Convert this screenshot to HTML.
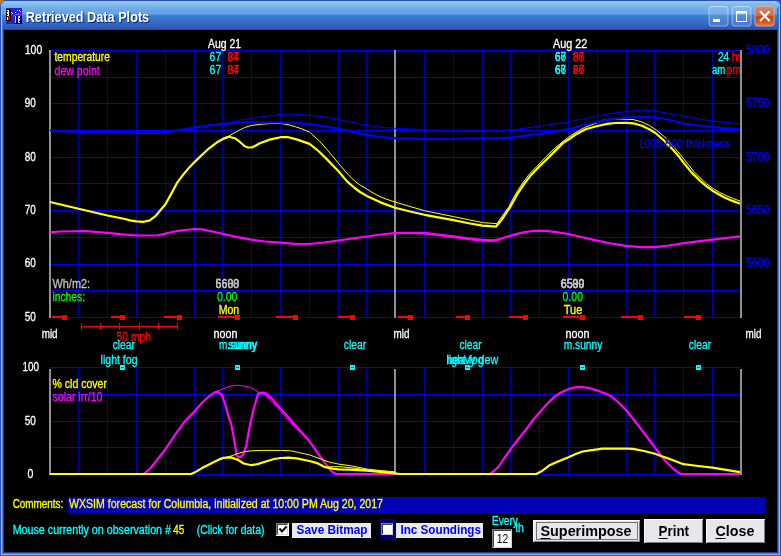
<!DOCTYPE html>
<html><head><meta charset="utf-8"><title>Retrieved Data Plots</title>
<style>html,body{margin:0;padding:0;background:#000;overflow:hidden}svg{display:block;will-change:transform}text{font-family:"Liberation Sans",sans-serif;font-size:12px}.b{font-weight:bold}</style></head><body>
<svg width="781" height="556" viewBox="0 0 781 556">
<defs>
<linearGradient id="tb" x1="0" y1="0" x2="0" y2="30" gradientUnits="userSpaceOnUse"><stop offset="0" stop-color="#2444a8"/><stop offset="0.03" stop-color="#2444a8"/><stop offset="0.045" stop-color="#a0d0f2"/><stop offset="0.1" stop-color="#86c2ee"/><stop offset="0.3" stop-color="#6eaae8"/><stop offset="0.475" stop-color="#62a0e8"/><stop offset="0.5" stop-color="#3a82d2"/><stop offset="0.7" stop-color="#3670c8"/><stop offset="0.9" stop-color="#305cb8"/><stop offset="0.975" stop-color="#2c54b0"/><stop offset="1" stop-color="#1a3070"/></linearGradient>
<linearGradient id="btn" x1="0" y1="0" x2="0" y2="1"><stop offset="0" stop-color="#6f93dd"/><stop offset="0.5" stop-color="#3d6fd0"/><stop offset="1" stop-color="#2f5fc4"/></linearGradient>
<linearGradient id="cls" x1="0" y1="0" x2="0" y2="1"><stop offset="0" stop-color="#d88868"/><stop offset="0.47" stop-color="#cc6a48"/><stop offset="0.5" stop-color="#cc4416"/><stop offset="0.8" stop-color="#d8531e"/><stop offset="1" stop-color="#e47a4c"/></linearGradient>
<clipPath id="cu"><rect x="49" y="40" width="691" height="290"/></clipPath>
</defs>
<rect x="0" y="0" width="781" height="556" fill="#2c4ca8"/>
<rect x="0" y="0" width="8" height="8" fill="#c8781e"/>
<path d="M0 556 V7 Q0 0 7 0 H774 Q781 0 781 7 V556 Z" fill="url(#tb)"/>
<rect x="0" y="30" width="781" height="526" fill="#2e5fc0"/>
<rect x="0" y="30" width="1" height="526" fill="#2e5fc0"/>
<rect x="780" y="30" width="1" height="526" fill="#2e5fc0"/>
<rect x="0" y="555" width="781" height="1" fill="#2e5fc0"/>
<rect x="1" y="30" width="1" height="525" fill="#7faee2"/>
<rect x="779" y="30" width="1" height="525" fill="#7faee2"/>
<rect x="1" y="554" width="779" height="1" fill="#7faee2"/>
<rect x="2" y="30" width="1" height="524" fill="#4a7cd2"/>
<rect x="778" y="30" width="1" height="524" fill="#4a7cd2"/>
<rect x="2" y="553" width="777" height="1" fill="#4a7cd2"/>
<rect x="3" y="30" width="1" height="523" fill="#1e3a98"/>
<rect x="777" y="30" width="1" height="523" fill="#1e3a98"/>
<rect x="3" y="552" width="775" height="1" fill="#1e3a98"/>
<rect x="4" y="30" width="773" height="522" fill="#000"/>
<path d="M0.5 552 V7 Q0.5 0.5 7 0.5 H774 Q780.5 0.5 780.5 7 V552" fill="none" stroke="#2c50b0" stroke-width="1"/>
<path d="M1.5 552 V7 Q1.5 1.5 7 1.5 H774 Q779.5 1.5 779.5 7 V552" fill="none" stroke="#90c0f0" stroke-width="1"/>
<rect x="2" y="6" width="1" height="24" fill="#5a8cdc" fill-opacity="0.6"/><rect x="778" y="6" width="1" height="24" fill="#4a7cd2" fill-opacity="0.8"/>
<rect x="777" y="8" width="1" height="22" fill="#2a4cae" fill-opacity="0.6"/>
<g shape-rendering="crispEdges">
<rect x="6" y="8" width="16" height="16" fill="#2424cc"/>
<rect x="15" y="16" width="7" height="8" fill="#000088"/>
<rect x="6" y="9" width="5" height="12" fill="#000"/>
<rect x="7" y="10" width="3" height="10" fill="#fff"/>
<rect x="9" y="10" width="1" height="8" fill="#000"/>
<rect x="8" y="16" width="2" height="4" fill="#e00000"/>
<rect x="6" y="11" width="2" height="1" fill="#000"/>
<rect x="6" y="14" width="2" height="1" fill="#000"/>
<rect x="6" y="16" width="2" height="1" fill="#000"/>
<rect x="15" y="16" width="1" height="7" fill="#dcdcdc"/><rect x="17" y="16" width="1" height="7" fill="#000"/><rect x="18" y="16" width="2" height="7" fill="#dcdcdc"/><rect x="19" y="18" width="1" height="1" fill="#000"/><rect x="19" y="21" width="1" height="1" fill="#000"/>
<rect x="11" y="12" width="1" height="1" fill="#ff0"/>
<rect x="12" y="13" width="1" height="1" fill="#ff0"/>
<rect x="15" y="12" width="1" height="1" fill="#ff0"/>
<rect x="17" y="10" width="1" height="1" fill="#ff0"/>
<rect x="19" y="10" width="1" height="1" fill="#ff0"/>
<rect x="20" y="11" width="1" height="1" fill="#ff0"/>
<rect x="11" y="14" width="1" height="1" fill="#f0f"/>
<rect x="15" y="14" width="1" height="1" fill="#f0f"/>
<rect x="17" y="14" width="1" height="1" fill="#f0f"/>
<rect x="18" y="14" width="1" height="1" fill="#f0f"/>
<rect x="20" y="14" width="1" height="1" fill="#f0f"/>
<rect x="14" y="15" width="1" height="1" fill="#0af"/>
<rect x="16" y="14" width="1" height="1" fill="#0af"/>
<rect x="18" y="13" width="1" height="1" fill="#0af"/>
</g>
<text class="b" x="26.7" y="22.9" style="font-size:14.4px" fill="#0a246a" textLength="123.5" lengthAdjust="spacingAndGlyphs">Retrieved Data Plots</text>
<text class="b" x="25.7" y="21.9" style="font-size:14.4px" fill="#fff" textLength="123.5" lengthAdjust="spacingAndGlyphs">Retrieved Data Plots</text>
<rect x="709" y="6.5" width="19" height="19.5" rx="2.5" fill="#ffffff" fill-opacity="0.13" stroke="#ffffff" stroke-opacity="0.45" stroke-width="1"/>
<rect x="732" y="6.5" width="19" height="19.5" rx="2.5" fill="#ffffff" fill-opacity="0.13" stroke="#ffffff" stroke-opacity="0.45" stroke-width="1"/>
<rect x="713" y="19" width="7" height="3" fill="#fff"/>
<rect x="736.5" y="12" width="10" height="9.5" fill="none" stroke="#fff" stroke-width="1"/><rect x="736" y="11" width="11" height="2.6" fill="#fff"/>
<rect x="755" y="6.5" width="19" height="19.5" rx="2.5" fill="url(#cls)" stroke="#f0b8a0" stroke-opacity="0.7" stroke-width="1"/>
<path d="M760 11.2 L769.6 21 M769.6 11.2 L760 21" stroke="#fff" stroke-width="2" fill="none"/>
<g shape-rendering="crispEdges">
<rect x="78" y="50" width="1" height="268" fill="#0000a8"/>
<rect x="78" y="367" width="1" height="108" fill="#0000a8"/>
<rect x="107" y="50" width="1" height="268" fill="#0000a8"/>
<rect x="107" y="367" width="1" height="108" fill="#0000a8"/>
<rect x="136" y="50" width="1" height="268" fill="#0000a8"/>
<rect x="136" y="367" width="1" height="108" fill="#0000a8"/>
<rect x="165" y="50" width="1" height="268" fill="#0000a8"/>
<rect x="165" y="367" width="1" height="108" fill="#0000a8"/>
<rect x="194" y="50" width="1" height="268" fill="#0000a8"/>
<rect x="194" y="367" width="1" height="108" fill="#0000a8"/>
<rect x="222" y="50" width="1" height="268" fill="#0000a8"/>
<rect x="222" y="367" width="1" height="108" fill="#0000a8"/>
<rect x="251" y="50" width="1" height="268" fill="#0000a8"/>
<rect x="251" y="367" width="1" height="108" fill="#0000a8"/>
<rect x="280" y="50" width="1" height="268" fill="#0000a8"/>
<rect x="280" y="367" width="1" height="108" fill="#0000a8"/>
<rect x="309" y="50" width="1" height="268" fill="#0000a8"/>
<rect x="309" y="367" width="1" height="108" fill="#0000a8"/>
<rect x="338" y="50" width="1" height="268" fill="#0000a8"/>
<rect x="338" y="367" width="1" height="108" fill="#0000a8"/>
<rect x="366" y="50" width="1" height="268" fill="#0000a8"/>
<rect x="366" y="367" width="1" height="108" fill="#0000a8"/>
<rect x="424" y="50" width="1" height="268" fill="#0000a8"/>
<rect x="424" y="367" width="1" height="108" fill="#0000a8"/>
<rect x="453" y="50" width="1" height="268" fill="#0000a8"/>
<rect x="453" y="367" width="1" height="108" fill="#0000a8"/>
<rect x="482" y="50" width="1" height="268" fill="#0000a8"/>
<rect x="482" y="367" width="1" height="108" fill="#0000a8"/>
<rect x="510" y="50" width="1" height="268" fill="#0000a8"/>
<rect x="510" y="367" width="1" height="108" fill="#0000a8"/>
<rect x="539" y="50" width="1" height="268" fill="#0000a8"/>
<rect x="539" y="367" width="1" height="108" fill="#0000a8"/>
<rect x="568" y="50" width="1" height="268" fill="#0000a8"/>
<rect x="568" y="367" width="1" height="108" fill="#0000a8"/>
<rect x="597" y="50" width="1" height="268" fill="#0000a8"/>
<rect x="597" y="367" width="1" height="108" fill="#0000a8"/>
<rect x="626" y="50" width="1" height="268" fill="#0000a8"/>
<rect x="626" y="367" width="1" height="108" fill="#0000a8"/>
<rect x="654" y="50" width="1" height="268" fill="#0000a8"/>
<rect x="654" y="367" width="1" height="108" fill="#0000a8"/>
<rect x="683" y="50" width="1" height="268" fill="#0000a8"/>
<rect x="683" y="367" width="1" height="108" fill="#0000a8"/>
<rect x="712" y="50" width="1" height="268" fill="#0000a8"/>
<rect x="712" y="367" width="1" height="108" fill="#0000a8"/>
<rect x="50" y="50" width="691" height="1" fill="#0000f0"/>
<rect x="50" y="77" width="691" height="1" fill="#0000f0"/>
<rect x="50" y="103" width="691" height="1" fill="#0000f0"/>
<rect x="50" y="130" width="691" height="1" fill="#0000f0"/>
<rect x="50" y="157" width="691" height="1" fill="#0000f0"/>
<rect x="50" y="183" width="691" height="1" fill="#0000f0"/>
<rect x="50" y="210" width="691" height="1" fill="#0000f0"/>
<rect x="50" y="237" width="691" height="1" fill="#0000f0"/>
<rect x="50" y="264" width="691" height="1" fill="#0000f0"/>
<rect x="50" y="290" width="691" height="1" fill="#0000f0"/>
<rect x="50" y="317" width="691" height="1" fill="#0000f0"/>
<rect x="50" y="367" width="691" height="1" fill="#0000f0"/>
<rect x="50" y="394" width="691" height="1" fill="#0000f0"/>
<rect x="50" y="421" width="691" height="1" fill="#0000f0"/>
<rect x="50" y="447" width="691" height="1" fill="#0000f0"/>
<rect x="50" y="474" width="691" height="1" fill="#0000f0"/>
<rect x="49" y="50" width="2" height="268" fill="#909090"/>
<rect x="49" y="369" width="2" height="106" fill="#909090"/>
<rect x="394" y="50" width="2" height="268" fill="#909090"/>
<rect x="394" y="369" width="2" height="106" fill="#909090"/>
<rect x="740" y="50" width="2" height="268" fill="#909090"/>
<rect x="740" y="369" width="2" height="106" fill="#909090"/>
</g>
<polyline points="222.0,138.5 228.9,136.0 236.8,131.5 244.7,127.5 251.5,125.4 261.7,124.2 270.0,123.6 280.5,123.4 288.0,124.6 295.4,126.7 302.0,129.0 309.6,132.1 319.0,140.6 327.0,149.5 338.5,163.3 346.8,173.2 354.7,181.1 360.0,185.0 366.8,189.0 374.0,193.5 381.0,197.2 388.0,199.7 395.0,202.0 410.0,206.5 424.5,210.7 453.4,216.6 470.0,220.0 482.5,222.6 497.0,223.7 503.0,215.0 508.9,206.8 515.0,195.0 521.8,184.1 529.0,174.5 537.0,166.2 545.6,157.1 555.0,148.0 565.0,139.8 568.6,137.1 575.8,132.3 584.5,127.5 597.4,122.6 603.5,120.2 609.3,119.5 620.2,119.2 633.0,119.5 642.0,122.0 649.6,125.6 657.3,130.7 665.6,137.8 673.0,146.0 680.7,155.0 687.0,163.0 693.7,171.3 700.0,177.8 706.6,183.8 713.0,188.5 719.6,192.4 726.0,195.5 732.5,198.3 740.0,201.0" fill="none" stroke="#ffff00" stroke-width="1" stroke-linejoin="round" />
<polyline points="222.0,124.0 227.0,123.3 236.0,121.2 240.0,119.8 251.5,118.4 265.0,116.3 280.5,114.5 289.4,114.1 297.0,114.3 309.6,115.3 324.0,117.0 338.5,119.4 352.0,122.2 360.0,123.8 366.8,124.9 380.0,127.3 395.0,128.3 415.0,129.2 430.0,130.0 453.0,131.0 470.0,131.3 482.6,131.4 497.0,130.8 510.4,130.1 524.0,128.3 539.5,126.2 554.0,124.0 568.6,122.0 580.0,119.5 597.5,116.0 611.0,113.5 626.6,111.5 639.4,110.0 654.8,110.9 669.0,113.5 684.2,116.2 698.0,118.8 712.5,121.0 726.0,122.5 740.0,123.8" fill="none" stroke="#0000ff" stroke-width="1" stroke-linejoin="round" />
<polyline points="50.0,130.5 58.0,131.2 70.0,131.5 80.0,132.0 107.0,132.2 120.0,132.5 136.0,132.9 157.7,132.9 165.0,132.2 171.5,131.5 180.0,130.0 194.5,127.5 210.0,125.4 222.5,123.8 236.0,122.8 251.5,122.4 280.5,122.4 297.3,123.2 309.6,124.2 324.0,126.3 338.5,128.7 352.0,131.8 360.0,133.7 366.8,134.8 380.0,137.0 395.0,138.1 410.0,138.5 424.0,138.8 453.0,138.8 470.0,138.5 482.0,138.4 500.0,138.2 510.4,137.7 524.0,135.8 539.5,133.8 554.0,131.7 568.6,129.2 579.2,126.2 597.5,121.8 611.2,119.2 626.6,117.6 636.8,116.9 654.8,117.3 665.6,119.0 683.5,123.3 698.0,125.5 712.5,127.0 726.0,128.4 740.0,129.6" fill="none" stroke="#0000ff" stroke-width="2.2" stroke-linejoin="round" />
<polyline points="410.0,233.5 424.5,233.9 438.0,235.6 453.4,237.6 468.0,239.6 482.6,241.2 493.4,241.6 500.0,240.0" fill="none" stroke="#ff00ff" stroke-width="1" stroke-linejoin="round" />
<polyline points="50.0,232.3 60.0,231.5 86.0,231.0 95.0,231.8 107.5,232.8 120.0,234.2 136.6,235.5 157.5,235.5 165.5,233.6 172.0,232.0 180.0,230.7 194.4,229.0 202.0,229.3 210.0,231.0 222.4,233.8 236.0,236.8 251.3,239.7 265.0,241.5 280.4,242.7 295.0,243.8 309.3,244.0 324.0,242.5 338.5,240.5 352.0,238.5 366.8,236.5 381.0,234.5 395.0,233.2 410.0,232.8 424.5,232.9 438.0,234.5 453.4,236.4 468.0,238.4 482.6,239.9 493.4,240.4 500.0,239.0 510.9,235.6 518.0,233.6 525.0,232.2 533.0,231.0 540.0,230.7 548.0,231.2 556.0,232.2 568.4,234.0 580.0,236.8 597.2,240.6 611.0,243.5 626.1,245.8 641.0,247.2 655.0,247.2 669.0,245.5 684.2,243.1 698.0,241.3 712.5,239.6 726.0,238.0 740.0,236.4" fill="none" stroke="#ff00ff" stroke-width="2.2" stroke-linejoin="round" />
<polyline points="50.0,202.0 78.6,208.8 107.5,215.5 125.0,219.0 130.0,220.4 136.5,221.4 143.8,221.8 149.8,220.4 155.7,215.9 160.6,210.0 165.6,204.0 171.5,193.2 177.4,182.3 183.4,174.4 189.3,167.4 194.5,162.1 201.2,155.6 209.1,148.3 217.0,142.3 222.5,139.2 228.9,136.8 234.8,138.2 239.7,141.7 244.7,146.3 247.5,147.3 251.5,147.5 255.0,146.0 259.8,143.2 269.7,139.6 280.5,137.2 287.5,137.0 297.3,139.6 309.6,143.9 319.0,151.5 327.0,159.4 338.5,171.2 346.8,181.1 354.7,188.0 360.0,192.0 366.8,195.9 381.0,202.6 395.0,207.8 410.0,211.5 424.5,214.8 453.4,220.2 470.0,223.5 482.5,225.6 495.9,226.7 502.4,218.7 510.4,206.8 517.5,193.8 524.0,184.1 531.6,174.4 539.5,166.2 547.8,158.2 556.4,149.6 562.9,143.1 568.6,139.5 576.6,133.9 585.6,129.2 597.5,126.0 607.4,123.9 615.0,123.0 626.6,122.8 633.0,123.3 642.0,125.8 649.6,129.5 654.8,132.5 663.4,140.0 672.0,148.6 678.6,156.2 683.5,162.6 691.5,172.4 700.2,181.0 706.6,186.4 712.5,190.7 723.9,197.2 732.5,200.9 740.0,203.7" fill="none" stroke="#ffff00" stroke-width="2.2" stroke-linejoin="round" />
<polyline points="213.0,392.8 215.6,391.5 222.8,388.9 230.0,386.3 237.1,385.2 244.0,386.0 251.5,387.7 258.0,392.0 262.0,393.5 266.0,396.0 272.0,401.5 280.6,411.5 292.0,424.0 300.0,432.5" fill="none" stroke="#ff00ff" stroke-width="1" stroke-linejoin="round" />
<polyline points="50.0,474.0 143.5,474.0 149.8,469.0 157.0,460.0 165.4,449.2 175.0,434.9 184.0,422.3 194.4,411.5 202.0,402.8 209.1,396.2 215.4,391.8 218.5,392.3 221.8,394.8 225.6,405.5 228.9,418.0 231.0,423.0 234.0,438.5 236.7,455.0 238.2,457.6 241.0,456.5 243.7,453.9 246.4,444.7 250.5,422.0 254.5,405.7 258.2,393.4 262.0,392.7 265.8,393.4 272.0,398.6 280.6,408.8 292.5,422.1 309.5,441.3 321.1,457.8 331.4,471.3 335.9,474.0 395.0,474.0 489.9,474.0 494.0,471.0 498.3,467.0 504.0,458.5 511.0,448.7 518.0,439.5 526.5,429.0 533.0,420.0 539.8,412.1 547.0,404.0 554.6,396.6 561.0,392.5 568.5,389.0 575.0,387.3 581.0,386.8 589.0,388.0 597.5,390.4 604.0,393.0 610.7,396.0 618.0,402.0 626.2,410.1 632.0,417.5 638.9,426.2 647.0,437.0 654.9,447.3 661.0,455.5 667.0,462.8 673.0,468.5 678.3,472.7 681.0,474.0 740.0,474.0" fill="none" stroke="#ff00ff" stroke-width="2.2" stroke-linejoin="round" />
<polyline points="225.0,457.5 231.0,456.0 237.0,453.9 243.7,451.8 251.5,450.8 261.7,450.4 280.6,450.4 290.4,450.8 298.6,452.5 309.5,454.9 319.0,458.4 329.3,462.1 338.6,464.1 350.0,465.6 366.8,469.0 380.0,470.5 395.0,471.8" fill="none" stroke="#ffff00" stroke-width="1" stroke-linejoin="round" />
<polyline points="325.0,467.0 338.6,466.6 350.0,467.6 366.8,469.8 395.0,472.6" fill="none" stroke="#ffff00" stroke-width="1" stroke-linejoin="round" />
<polyline points="50.0,474.0 191.2,474.0 194.4,472.6 202.0,468.1 211.0,463.6 220.0,459.1 223.5,457.9 231.0,457.4 238.2,460.0 243.7,463.5 251.5,465.2 257.6,464.1 265.8,461.5 274.0,459.0 280.6,458.0 288.4,457.6 296.6,458.4 309.5,461.0 317.0,463.1 325.2,467.2 333.4,468.9 338.6,469.3 350.0,469.6 366.8,470.7 380.0,472.0 395.0,473.4 400.0,474.0 536.3,474.0 542.0,471.0 549.0,465.6 558.0,461.5 568.5,457.2 575.0,454.3 582.5,451.5 590.0,450.3 597.5,449.3 602.0,448.7 626.2,448.7 633.0,448.9 644.0,451.0 654.9,453.8 661.0,456.0 667.0,458.0 675.0,461.0 683.4,464.2 698.0,466.0 712.4,467.6 726.0,469.8 740.0,472.1" fill="none" stroke="#ffff00" stroke-width="2.2" stroke-linejoin="round" />
<g shape-rendering="crispEdges">
<rect x="62" y="315" width="5" height="5" fill="#ff0000"/>
<rect x="52" y="316" width="10" height="2" fill="#ff0000"/>
<rect x="120" y="315" width="5" height="5" fill="#ff0000"/>
<rect x="111" y="316" width="9" height="2" fill="#ff0000"/>
<rect x="177" y="315" width="5" height="5" fill="#ff0000"/>
<rect x="164" y="316" width="13" height="2" fill="#ff0000"/>
<rect x="235" y="315" width="5" height="5" fill="#ff0000"/>
<rect x="218" y="316" width="17" height="2" fill="#ff0000"/>
<rect x="293" y="315" width="5" height="5" fill="#ff0000"/>
<rect x="276" y="316" width="17" height="2" fill="#ff0000"/>
<rect x="350" y="315" width="5" height="5" fill="#ff0000"/>
<rect x="338" y="316" width="12" height="2" fill="#ff0000"/>
<rect x="408" y="315" width="5" height="5" fill="#ff0000"/>
<rect x="398" y="316" width="10" height="2" fill="#ff0000"/>
<rect x="465" y="315" width="5" height="5" fill="#ff0000"/>
<rect x="456" y="316" width="9" height="2" fill="#ff0000"/>
<rect x="523" y="315" width="5" height="5" fill="#ff0000"/>
<rect x="509" y="316" width="14" height="2" fill="#ff0000"/>
<rect x="580" y="315" width="5" height="5" fill="#ff0000"/>
<rect x="563" y="316" width="17" height="2" fill="#ff0000"/>
<rect x="638" y="315" width="5" height="5" fill="#ff0000"/>
<rect x="621" y="316" width="17" height="2" fill="#ff0000"/>
<rect x="696" y="315" width="5" height="5" fill="#ff0000"/>
<rect x="684" y="316" width="12" height="2" fill="#ff0000"/>
<rect x="81" y="326" width="97" height="1" fill="#ff0000"/>
<rect x="81" y="323" width="1" height="7" fill="#ff0000"/>
<rect x="100" y="323" width="1" height="7" fill="#ff0000"/>
<rect x="119" y="323" width="1" height="7" fill="#ff0000"/>
<rect x="139" y="323" width="1" height="7" fill="#ff0000"/>
<rect x="158" y="323" width="1" height="7" fill="#ff0000"/>
<rect x="177" y="323" width="1" height="7" fill="#ff0000"/>
<rect x="120" y="365" width="5" height="5" fill="#00ffff"/>
<rect x="121" y="367" width="3" height="1" fill="#0040ff"/>
<rect x="235" y="365" width="5" height="5" fill="#00ffff"/>
<rect x="236" y="367" width="3" height="1" fill="#0040ff"/>
<rect x="350" y="365" width="5" height="5" fill="#00ffff"/>
<rect x="351" y="367" width="3" height="1" fill="#0040ff"/>
<rect x="465" y="365" width="5" height="5" fill="#00ffff"/>
<rect x="466" y="367" width="3" height="1" fill="#0040ff"/>
<rect x="580" y="365" width="5" height="5" fill="#00ffff"/>
<rect x="581" y="367" width="3" height="1" fill="#0040ff"/>
<rect x="696" y="365" width="5" height="5" fill="#00ffff"/>
<rect x="697" y="367" width="3" height="1" fill="#0040ff"/>
</g>
<text x="24.8" y="53.7" fill="#ffffff" stroke="#ffffff" stroke-width="0.3" textLength="17.4" lengthAdjust="spacingAndGlyphs">100</text>
<text x="24.8" y="107.1" fill="#ffffff" stroke="#ffffff" stroke-width="0.3" textLength="11.1" lengthAdjust="spacingAndGlyphs">90</text>
<text x="24.8" y="160.5" fill="#ffffff" stroke="#ffffff" stroke-width="0.3" textLength="11.1" lengthAdjust="spacingAndGlyphs">80</text>
<text x="24.8" y="213.9" fill="#ffffff" stroke="#ffffff" stroke-width="0.3" textLength="11.1" lengthAdjust="spacingAndGlyphs">70</text>
<text x="24.8" y="267.3" fill="#ffffff" stroke="#ffffff" stroke-width="0.3" textLength="11.1" lengthAdjust="spacingAndGlyphs">60</text>
<text x="24.8" y="320.7" fill="#ffffff" stroke="#ffffff" stroke-width="0.3" textLength="11.1" lengthAdjust="spacingAndGlyphs">50</text>
<text x="746.0" y="53.7" fill="#0000ff" stroke="#0000ff" stroke-width="0.3" textLength="23.3" lengthAdjust="spacingAndGlyphs">5800</text>
<text x="746.0" y="107.1" fill="#0000ff" stroke="#0000ff" stroke-width="0.3" textLength="23.3" lengthAdjust="spacingAndGlyphs">5750</text>
<text x="746.0" y="160.5" fill="#0000ff" stroke="#0000ff" stroke-width="0.3" textLength="23.3" lengthAdjust="spacingAndGlyphs">5700</text>
<text x="746.0" y="213.9" fill="#0000ff" stroke="#0000ff" stroke-width="0.3" textLength="23.3" lengthAdjust="spacingAndGlyphs">5650</text>
<text x="746.0" y="267.3" fill="#0000ff" stroke="#0000ff" stroke-width="0.3" textLength="23.3" lengthAdjust="spacingAndGlyphs">5600</text>
<text x="208.1" y="47.7" fill="#ffffff" stroke="#ffffff" stroke-width="0.3" textLength="33.0" lengthAdjust="spacingAndGlyphs">Aug 21</text>
<text x="553.0" y="47.7" fill="#ffffff" stroke="#ffffff" stroke-width="0.3" textLength="34.3" lengthAdjust="spacingAndGlyphs">Aug 22</text>
<text x="209.6" y="60.7" fill="#00ffff" stroke="#00ffff" stroke-width="0.3" textLength="11.6" lengthAdjust="spacingAndGlyphs">67</text>
<text x="227.6" y="60.7" fill="#ff0000" stroke="#ff0000" stroke-width="0.3" textLength="11.5" lengthAdjust="spacingAndGlyphs">84</text>
<text x="227.6" y="60.7" fill="#ff0000" stroke="#ff0000" stroke-width="0.3" textLength="11.5" lengthAdjust="spacingAndGlyphs">87</text>
<text x="554.9" y="60.7" fill="#00ffff" stroke="#00ffff" stroke-width="0.3" textLength="11.1" lengthAdjust="spacingAndGlyphs">66</text>
<text x="554.9" y="60.7" fill="#00ffff" stroke="#00ffff" stroke-width="0.3" textLength="11.1" lengthAdjust="spacingAndGlyphs">67</text>
<text x="572.7" y="60.7" fill="#ff0000" stroke="#ff0000" stroke-width="0.3" textLength="11.8" lengthAdjust="spacingAndGlyphs">86</text>
<text x="572.7" y="60.7" fill="#ff0000" stroke="#ff0000" stroke-width="0.3" textLength="11.8" lengthAdjust="spacingAndGlyphs">87</text>
<text x="209.6" y="73.5" fill="#00ffff" stroke="#00ffff" stroke-width="0.3" textLength="11.6" lengthAdjust="spacingAndGlyphs">67</text>
<text x="227.6" y="73.5" fill="#ff0000" stroke="#ff0000" stroke-width="0.3" textLength="11.5" lengthAdjust="spacingAndGlyphs">84</text>
<text x="227.6" y="73.5" fill="#ff0000" stroke="#ff0000" stroke-width="0.3" textLength="11.5" lengthAdjust="spacingAndGlyphs">87</text>
<text x="554.9" y="73.5" fill="#00ffff" stroke="#00ffff" stroke-width="0.3" textLength="11.1" lengthAdjust="spacingAndGlyphs">66</text>
<text x="554.9" y="73.5" fill="#00ffff" stroke="#00ffff" stroke-width="0.3" textLength="11.1" lengthAdjust="spacingAndGlyphs">67</text>
<text x="572.7" y="73.5" fill="#ff0000" stroke="#ff0000" stroke-width="0.3" textLength="11.8" lengthAdjust="spacingAndGlyphs">86</text>
<text x="572.7" y="73.5" fill="#ff0000" stroke="#ff0000" stroke-width="0.3" textLength="11.8" lengthAdjust="spacingAndGlyphs">87</text>
<text x="717.9" y="60.8" fill="#00ffff" stroke="#00ffff" stroke-width="0.3" textLength="11.3" lengthAdjust="spacingAndGlyphs">24</text>
<text x="731.7" y="60.8" fill="#ff0000" stroke="#ff0000" stroke-width="0.3" textLength="9.5" lengthAdjust="spacingAndGlyphs" clip-path="url(#cu)">hr</text>
<text x="712.0" y="73.7" fill="#00ffff" stroke="#00ffff" stroke-width="0.3" textLength="13.3" lengthAdjust="spacingAndGlyphs">am</text>
<text x="726.8" y="73.7" fill="#ff0000" stroke="#ff0000" stroke-width="0.3" textLength="14.2" lengthAdjust="spacingAndGlyphs" clip-path="url(#cu)">pm</text>
<text x="54.5" y="61.2" fill="#ffff00" stroke="#ffff00" stroke-width="0.3" textLength="55.5" lengthAdjust="spacingAndGlyphs">temperature</text>
<text x="54.5" y="74.5" fill="#ff00ff" stroke="#ff00ff" stroke-width="0.3" textLength="45.3" lengthAdjust="spacingAndGlyphs">dew point</text>
<text x="638.3" y="148.0" fill="#0000ff" stroke="#0000ff" stroke-width="0.3" textLength="91.7" lengthAdjust="spacingAndGlyphs">1000-500 thickness</text>
<text x="52.5" y="287.7" fill="#c0c0c0" stroke="#c0c0c0" stroke-width="0.3" textLength="37.6" lengthAdjust="spacingAndGlyphs">Wh/m2:</text>
<text x="52.5" y="301.0" fill="#00ff00" stroke="#00ff00" stroke-width="0.3" textLength="32.5" lengthAdjust="spacingAndGlyphs">inches:</text>
<text x="215.6" y="287.9" fill="#c0c0c0" stroke="#c0c0c0" stroke-width="0.3" textLength="23.6" lengthAdjust="spacingAndGlyphs">6688</text>
<text x="215.6" y="287.9" fill="#c0c0c0" stroke="#c0c0c0" stroke-width="0.3" textLength="23.6" lengthAdjust="spacingAndGlyphs">5600</text>
<text x="216.9" y="301.0" fill="#00ff00" stroke="#00ff00" stroke-width="0.3" textLength="20.5" lengthAdjust="spacingAndGlyphs">0.00</text>
<text x="218.7" y="313.8" fill="#ffff00" stroke="#ffff00" stroke-width="0.3" textLength="20.5" lengthAdjust="spacingAndGlyphs">Mon</text>
<text x="560.8" y="287.9" fill="#c0c0c0" stroke="#c0c0c0" stroke-width="0.3" textLength="23.5" lengthAdjust="spacingAndGlyphs">6590</text>
<text x="560.8" y="287.9" fill="#c0c0c0" stroke="#c0c0c0" stroke-width="0.3" textLength="23.5" lengthAdjust="spacingAndGlyphs">6500</text>
<text x="560.8" y="287.9" fill="#c0c0c0" stroke="#c0c0c0" stroke-width="0.3" textLength="23.5" lengthAdjust="spacingAndGlyphs">6539</text>
<text x="562.6" y="301.0" fill="#00ff00" stroke="#00ff00" stroke-width="0.3" textLength="20.4" lengthAdjust="spacingAndGlyphs">0.00</text>
<text x="563.8" y="313.8" fill="#ffff00" stroke="#ffff00" stroke-width="0.3" textLength="18.5" lengthAdjust="spacingAndGlyphs">Tue</text>
<text x="116.5" y="341.2" fill="#ff0000" stroke="#ff0000" stroke-width="0.3" textLength="34.5" lengthAdjust="spacingAndGlyphs">50 mph</text>
<text x="41.7" y="338.2" fill="#ffffff" stroke="#ffffff" stroke-width="0.3" textLength="15.9" lengthAdjust="spacingAndGlyphs">mid</text>
<text x="393.6" y="338.2" fill="#ffffff" stroke="#ffffff" stroke-width="0.3" textLength="15.9" lengthAdjust="spacingAndGlyphs">mid</text>
<text x="745.6" y="338.2" fill="#ffffff" stroke="#ffffff" stroke-width="0.3" textLength="15.9" lengthAdjust="spacingAndGlyphs">mid</text>
<text x="213.6" y="338.2" fill="#ffffff" stroke="#ffffff" stroke-width="0.3" textLength="23.8" lengthAdjust="spacingAndGlyphs">noon</text>
<text x="565.6" y="338.2" fill="#ffffff" stroke="#ffffff" stroke-width="0.3" textLength="23.8" lengthAdjust="spacingAndGlyphs">noon</text>
<text x="112.7" y="348.8" fill="#00ffff" stroke="#00ffff" stroke-width="0.3" textLength="22.3" lengthAdjust="spacingAndGlyphs">clear</text>
<text x="343.8" y="348.8" fill="#00ffff" stroke="#00ffff" stroke-width="0.3" textLength="22.3" lengthAdjust="spacingAndGlyphs">clear</text>
<text x="459.4" y="348.8" fill="#00ffff" stroke="#00ffff" stroke-width="0.3" textLength="22.3" lengthAdjust="spacingAndGlyphs">clear</text>
<text x="688.8" y="348.8" fill="#00ffff" stroke="#00ffff" stroke-width="0.3" textLength="22.3" lengthAdjust="spacingAndGlyphs">clear</text>
<text x="219.0" y="348.8" fill="#00ffff" stroke="#00ffff" stroke-width="0.3" textLength="38.2" lengthAdjust="spacingAndGlyphs">m.sunny</text>
<text x="228.0" y="348.8" fill="#00ffff" stroke="#00ffff" stroke-width="0.3" textLength="29.0" lengthAdjust="spacingAndGlyphs">sunny</text>
<text x="563.8" y="348.8" fill="#00ffff" stroke="#00ffff" stroke-width="0.3" textLength="38.5" lengthAdjust="spacingAndGlyphs">m.sunny</text>
<text x="100.6" y="363.7" fill="#00ffff" stroke="#00ffff" stroke-width="0.3" textLength="36.9" lengthAdjust="spacingAndGlyphs">light fog</text>
<text x="446.6" y="363.7" fill="#00ffff" stroke="#00ffff" stroke-width="0.3" textLength="36.9" lengthAdjust="spacingAndGlyphs">light fog</text>
<text x="446.6" y="363.7" fill="#00ffff" stroke="#00ffff" stroke-width="0.3" textLength="51.7" lengthAdjust="spacingAndGlyphs">heavy dew</text>
<text x="22.5" y="371.3" fill="#ffffff" stroke="#ffffff" stroke-width="0.3" textLength="16.5" lengthAdjust="spacingAndGlyphs">100</text>
<text x="24.8" y="425.0" fill="#ffffff" stroke="#ffffff" stroke-width="0.3" textLength="11.1" lengthAdjust="spacingAndGlyphs">50</text>
<text x="27.4" y="478.4" fill="#ffffff" stroke="#ffffff" stroke-width="0.3" textLength="5.9" lengthAdjust="spacingAndGlyphs">0</text>
<text x="52.5" y="387.8" fill="#ffff00" stroke="#ffff00" stroke-width="0.3" textLength="54.5" lengthAdjust="spacingAndGlyphs">% cld cover</text>
<text x="52.5" y="400.6" fill="#ff00ff" stroke="#ff00ff" stroke-width="0.3" textLength="49.9" lengthAdjust="spacingAndGlyphs">solar irr/10</text>
<rect x="68" y="497" width="697" height="16" fill="#0000b4" shape-rendering="crispEdges"/>
<text x="12.7" y="507.6" fill="#ffff00" stroke="#ffff00" stroke-width="0.3" textLength="50.6" lengthAdjust="spacingAndGlyphs">Comments:</text>
<text x="69.0" y="507.6" fill="#ffff00" stroke="#ffff00" stroke-width="0.3" textLength="314.0" lengthAdjust="spacingAndGlyphs">WXSIM forecast for Columbia, initialized at 10:00 PM Aug 20, 2017</text>
<text x="12.7" y="534.3" fill="#00ffff" stroke="#00ffff" stroke-width="0.3" textLength="158.3" lengthAdjust="spacingAndGlyphs">Mouse currently on observation #</text>
<text x="173.3" y="534.3" fill="#ffff00" stroke="#ffff00" stroke-width="0.3" textLength="11.0" lengthAdjust="spacingAndGlyphs">45</text>
<text x="196.7" y="534.3" fill="#00ffff" stroke="#00ffff" stroke-width="0.3" textLength="67.8" lengthAdjust="spacingAndGlyphs">(Click for data)</text>
<g shape-rendering="crispEdges">
<rect x="276" y="523" width="13" height="13" fill="#fff"/>
<rect x="276" y="523" width="13" height="1" fill="#808080"/><rect x="276" y="523" width="1" height="13" fill="#808080"/>
<rect x="277" y="524" width="11" height="1" fill="#404040"/><rect x="277" y="524" width="1" height="11" fill="#404040"/>
<rect x="288" y="523" width="1" height="13" fill="#fff"/><rect x="276" y="535" width="13" height="1" fill="#fff"/>
<rect x="287" y="524" width="1" height="11" fill="#d4d0c8"/><rect x="277" y="534" width="11" height="1" fill="#d4d0c8"/>
</g>
<path d="M279.5 528.5 L282 531.5 L286.5 526.5" stroke="#000" stroke-width="2" fill="none"/>
<g shape-rendering="crispEdges">
<rect x="292" y="523" width="79" height="15" fill="#e8e8f0"/>
<rect x="380" y="519" width="15" height="21" fill="#000080"/>
<rect x="381" y="523" width="12" height="12" fill="#fff"/>
<rect x="381" y="523" width="12" height="1" fill="#808080"/><rect x="381" y="523" width="1" height="12" fill="#808080"/>
<rect x="382" y="524" width="10" height="1" fill="#404040"/><rect x="382" y="524" width="1" height="10" fill="#404040"/>
<rect x="396" y="523" width="87" height="15" fill="#e8e8f0"/><rect x="392" y="524" width="1" height="11" fill="#d4d0c8"/><rect x="382" y="534" width="11" height="1" fill="#d4d0c8"/>
<rect x="492" y="529" width="20" height="19" fill="#fff"/>
<rect x="492" y="529" width="20" height="1" fill="#808080"/><rect x="492" y="529" width="1" height="19" fill="#808080"/>
<rect x="493" y="530" width="18" height="1" fill="#404040"/><rect x="493" y="530" width="1" height="17" fill="#404040"/>
<rect x="511" y="530" width="1" height="18" fill="#d4d0c8"/><rect x="493" y="547" width="19" height="1" fill="#d4d0c8"/>
<rect x="533" y="520" width="108" height="23" fill="#000"/>
<rect x="533" y="520" width="107" height="22" fill="#fff"/>
<rect x="534" y="521" width="106" height="21" fill="#808080"/>
<rect x="534" y="521" width="105" height="20" fill="#e8e6ec"/>
<rect x="644" y="519" width="60" height="25" fill="#000"/>
<rect x="644" y="519" width="59" height="24" fill="#fff"/>
<rect x="645" y="520" width="58" height="23" fill="#808080"/>
<rect x="645" y="520" width="57" height="22" fill="#e8e6ec"/>
<rect x="706" y="519" width="60" height="25" fill="#000"/>
<rect x="706" y="519" width="59" height="24" fill="#fff"/>
<rect x="707" y="520" width="58" height="23" fill="#808080"/>
<rect x="707" y="520" width="57" height="22" fill="#e8e6ec"/>
</g>
<rect x="536.5" y="522.5" width="101" height="17" fill="none" stroke="#000" stroke-width="1" stroke-dasharray="1 1"/>
<text x="296.6" y="533.9" fill="#0000ff" class="b" textLength="71.0" lengthAdjust="spacingAndGlyphs">Save Bitmap</text>
<text x="400.4" y="533.9" fill="#0000ff" class="b" textLength="80.6" lengthAdjust="spacingAndGlyphs">Inc Soundings</text>
<text x="491.9" y="524.8" fill="#00ffff" stroke="#00ffff" stroke-width="0.3" textLength="26.0" lengthAdjust="spacingAndGlyphs">Every</text>
<text x="515.2" y="531.5" fill="#00ffff" stroke="#00ffff" stroke-width="0.3" textLength="8.8" lengthAdjust="spacingAndGlyphs">th</text>
<text x="496.8" y="542.8" fill="#000" textLength="11.5" lengthAdjust="spacingAndGlyphs">12</text>
<text x="540.5" y="536.2" fill="#000" class="b" style="font-size:14px" textLength="91.0" lengthAdjust="spacingAndGlyphs">Superimpose</text>
<text x="658.6" y="536.4" fill="#000" class="b" style="font-size:14px" textLength="30.4" lengthAdjust="spacingAndGlyphs">Print</text>
<text x="715.5" y="536.4" fill="#000" class="b" style="font-size:14px" textLength="38.9" lengthAdjust="spacingAndGlyphs">Close</text>
<rect x="540.5" y="538" width="10" height="1" fill="#000"/><rect x="658.6" y="538" width="9" height="1" fill="#000"/><rect x="715.5" y="538" width="10" height="1" fill="#000"/>
</svg></body></html>
